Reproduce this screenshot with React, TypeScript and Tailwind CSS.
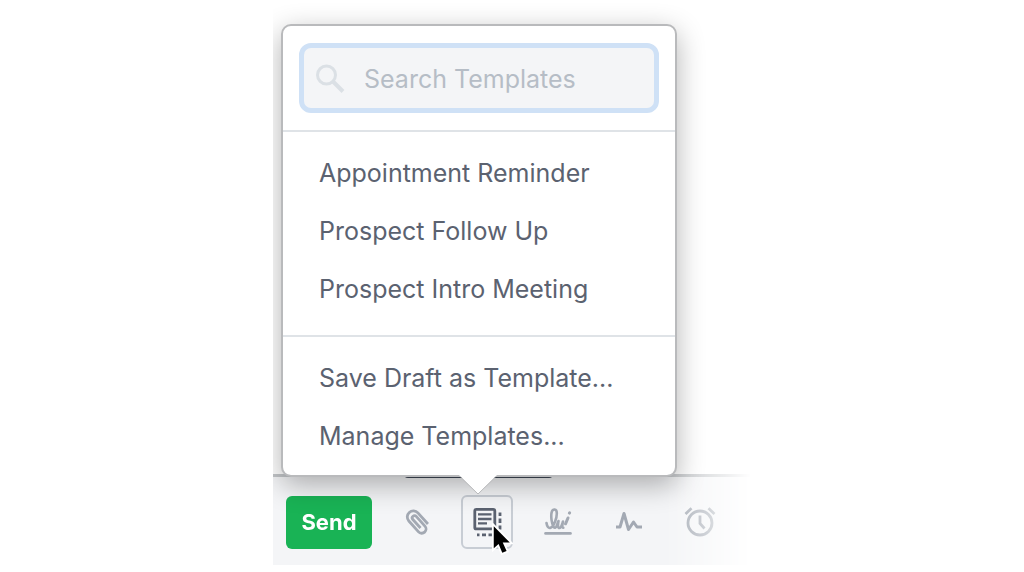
import React from 'react';

const templates = ['Appointment Reminder', 'Prospect Follow Up', 'Prospect Intro Meeting'];
const actions = ['Save Draft as Template...', 'Manage Templates...'];

const MenuItem: React.FC<{ label: string }> = ({ label }) => (
  <li>
    <button type="button" className="block h-[58px] w-full px-9 text-left text-[25px] leading-[58px] text-[#5b6270]">
      {label}
    </button>
  </li>
);

const ToolButton: React.FC<{ label: string; children: React.ReactNode }> = ({ label, children }) => (
  <button type="button" aria-label={label} className="flex h-[54px] w-[52px] shrink-0 items-center justify-center text-[#a3a9b3]">
    {children}
  </button>
);

const SearchIcon: React.FC = () => (
  <svg className="shrink-0" width="30" height="30" viewBox="0 0 30 30" fill="none" stroke="currentColor" aria-hidden="true">
    <circle cx="10.5" cy="12" r="9" strokeWidth="3" />
    <path d="M17 18.5 27 28.5" strokeWidth="4" />
  </svg>
);

const ClipIcon: React.FC = () => (
  <svg width="32" height="32" viewBox="-16 -16 32 32" fill="none" stroke="currentColor" strokeWidth="2.8" aria-hidden="true">
    <path
      transform="translate(1.5 0) rotate(48)"
      d="M8.5 -6.4H-6.5A6.1 6.1 0 0 0 -6.5 5.8H8A4.3 4.3 0 0 0 8 -2.8H-5A2.3 2.3 0 0 0 -5 1.8H6.5"
    />
  </svg>
);

const TemplateIcon: React.FC = () => (
  <svg width="30" height="30" viewBox="0 0 30 30" fill="none" stroke="currentColor" strokeWidth="2.8" aria-hidden="true">
    <rect x="2.8" y="2.3" width="20" height="19.6" rx="1.5" />
    <path d="M6 7.4H19.5M6 12H19.5M6 16.4H15" strokeWidth="2.4" />
    <path d="M28 5.5V9M28 11.5V16M28 18.5V22.5M5 27.8H7.5M10 27.8H14M16.5 27.8H20.5M23 27.8H28V25" strokeWidth="2.8" />
  </svg>
);

const SignatureIcon: React.FC = () => (
  <svg width="28" height="30" viewBox="0 0 28 30" fill="none" stroke="currentColor" strokeWidth="2.6" strokeLinecap="round" strokeLinejoin="round" aria-hidden="true">
    <path d="M2.5 16C3 19.5 4.5 21.5 6.5 20.8C10 19.5 13 11 12.8 6C12.7 1.6 8.6 1.2 7.6 5.5C6.7 9.5 7.8 17 9.5 19.5C10.6 21.4 12 21 12.6 19L14.5 14C13.8 17.5 13.6 21 15.5 21C17 21 18 17.5 19 14.5C18.3 17.5 17.8 20.8 19.3 20.8" />
    <path d="M21.5 16.8 24 11" strokeWidth="3" />
    <path d="M25.4 6.1 25.6 5.8" strokeWidth="3" />
    <path d="M1.5 26.4H26.5" strokeWidth="2.6" />
  </svg>
);

const PulseIcon: React.FC = () => (
  <svg width="28" height="24" viewBox="0 0 28 24" fill="none" stroke="currentColor" strokeWidth="3" strokeLinejoin="round" aria-hidden="true">
    <path d="M1 17H5L9 3.5 13.5 19.5 18.5 12 22 17H27" />
  </svg>
);

const AlarmIcon: React.FC = () => (
  <svg width="32" height="32" viewBox="0 0 32 32" fill="none" stroke="currentColor" strokeWidth="2.8" aria-hidden="true">
    <circle cx="16" cy="17" r="12" />
    <path d="M16 9.5V17.5L20.5 22.5" />
    <path d="M1.5 8 7.5 2.3M24.5 2.3 30.5 8" />
  </svg>
);

const Cursor: React.FC = () => (
  <svg className="pointer-events-none absolute top-7 left-[30px]" width="22" height="34" viewBox="0 0 24 36" aria-hidden="true">
    <path
      d="M3 3V27L8.3 22.3L12.3 32L17 30L12.8 20.6H20.5Z"
      fill="#000"
      stroke="#fff"
      strokeWidth="4"
      strokeLinejoin="miter"
      paintOrder="stroke"
    />
  </svg>
);

const TemplateMenu: React.FC = () => (
  <div className="relative z-10 ml-2 w-[396px] rounded-[10px] border-2 border-[#b9babc] bg-white bg-clip-padding shadow-[0_8px_28px_rgba(0,0,0,0.3)]">
    <div className="border-b-2 border-[#dfe3e7] px-4 py-[17px]">
      <label className="flex h-[70px] items-center gap-[18px] rounded-xl border-[5px] border-[#cfe1f6] bg-[#f4f5f7] px-3 text-[#dbe0e5]">
        <SearchIcon />
        <input
          type="text"
          aria-label="Search Templates"
          placeholder="Search Templates"
          className="w-full min-w-0 bg-transparent pt-1 text-[25px] text-[#5b6270] outline-none placeholder:text-[#b6bdc6]"
        />
      </label>
    </div>
    <ul className="border-b-2 border-[#dfe3e7] pt-3 pb-[17px]">
      {templates.map((label) => (
        <MenuItem key={label} label={label} />
      ))}
    </ul>
    <ul className="pt-3 pb-[10px]">
      {actions.map((label) => (
        <MenuItem key={label} label={label} />
      ))}
    </ul>
    <svg className="absolute top-full left-[175px]" width="40" height="22" viewBox="0 0 40 22" aria-hidden="true">
      <path d="M1 0 20 19 39 0Z" fill="#fff" />
      <path d="M2.5 2 20 19 37.5 2" fill="none" stroke="#b9babc" strokeWidth="1" />
      <path d="M2 -2H38V1H2Z" fill="#fff" />
    </svg>
  </div>
);

const Toolbar: React.FC = () => (
  <div className="relative -mt-[3px] flex items-center border-t-[3px] border-[#c3c6c9] bg-[#f4f5f7] px-[13px] pt-[18px] pb-4 mask-r-from-82% mask-r-to-100%">
    <div className="absolute -top-[3px] left-[131px] h-[4px] w-[149px] rounded-b bg-[#3f4856]" />
    <button type="button" className="h-[53px] w-[86px] shrink-0 rounded-md bg-[#19b355] text-[22px] font-bold text-white">
      Send
    </button>
    <div className="ml-[18px] flex gap-[19px]">
      <ToolButton label="Attach file">
        <ClipIcon />
      </ToolButton>
      <div className="relative">
        <button
          type="button"
          aria-label="Templates"
          aria-expanded="true"
          className="flex h-[54px] w-[52px] items-center justify-center rounded-md border-2 border-[#c8cdd4] text-[#5b6270]"
        >
          <TemplateIcon />
        </button>
        <Cursor />
      </div>
      <ToolButton label="Signature">
        <SignatureIcon />
      </ToolButton>
      <ToolButton label="Activity">
        <PulseIcon />
      </ToolButton>
      <ToolButton label="Remind me">
        <AlarmIcon />
      </ToolButton>
    </div>
  </div>
);

const App: React.FC = () => {
  return (
    <main className="min-h-screen bg-white font-['Inter',sans-serif]">
      <div className="mx-auto max-w-[478px] overflow-hidden pt-6">
        <TemplateMenu />
        <Toolbar />
      </div>
    </main>
  );
};

export default App;
